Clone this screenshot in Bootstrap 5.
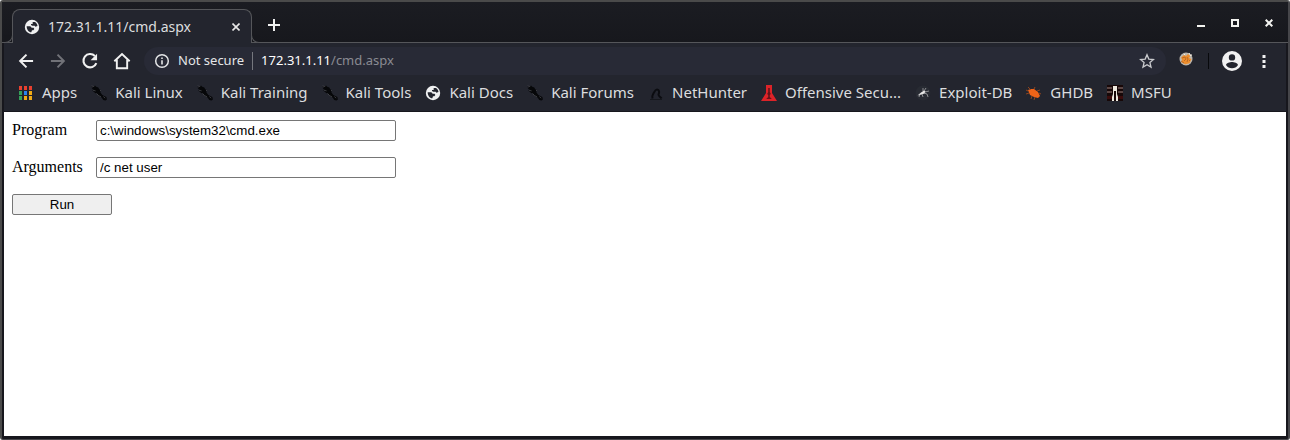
<!DOCTYPE html>
<html lang="en">
<head>
<meta charset="utf-8">
<meta name="viewport" content="width=device-width, initial-scale=1">
<title>172.31.1.11/cmd.aspx</title>
<link href="https://cdn.jsdelivr.net/npm/bootstrap@5.3.0/dist/css/bootstrap.min.css" rel="stylesheet">
<style>
body{background:#fff;color:#000;font-family:"Noto Sans",sans-serif}
.frame{background:#17171d;border:2px solid #4a4a4a;border-right-color:#46464a;border-bottom:1px solid #46464a;border-radius:3px;padding:0 2px 3px}
.titlebar{height:41px;background:linear-gradient(#1b1c22,#17181d);border-bottom:1px solid #55565a;padding:0 2px 0 10px;margin:0 -2px}
.browser-tab{position:relative;width:240px;height:34px;margin-bottom:-1px;background:#23252e;border:1px solid #55565a;border-bottom:0;border-radius:8px 8px 0 0;color:#dcdddf;font-size:14px;padding:0 11px}
.browser-tab::before,.browser-tab::after{content:"";position:absolute;bottom:0;width:9px;height:8px;border-bottom:1px solid #55565a;background:#17181d}
.browser-tab::before{left:-9px;border-right:1px solid #55565a;border-bottom-right-radius:8px}
.browser-tab::after{right:-9px;border-left:1px solid #55565a;border-bottom-left-radius:8px}
.plain{background:none;border:0;padding:0;color:#f1f1f1;display:flex;align-items:center;justify-content:center;flex:none}
.plain svg,.mark-link svg{display:block;flex:none}
.tool{width:32px;height:36px}
.win{width:34px;height:34px}
.new-tab{margin-left:5px}
.chrome{background:#23252e;color:#e4e5e7}
.controls{padding:0 6px}
.omnibox{background:#282a36;border-radius:14px;height:28px;font-size:13px;padding:0 11px 0 10px;margin-left:6px}
.split{width:1px;height:18px;background:#75777e}
.split-dark{width:1px;height:16px;background:#08090c;margin:0 7px 0 6px}
.address{color:#fff;text-decoration:none}
.address span{color:#8a8b92}
.marks{height:32px;gap:14px;font-size:15px;padding:0 14px 5px;white-space:nowrap}
.mark-link{color:#dcdddf;text-decoration:none;display:flex;align-items:center;gap:8px}
.viewport{background:#fff;margin-top:1px;min-height:calc(100vh - 116px);padding:8px;font-family:"Liberation Serif",serif;font-size:16px;line-height:20px}
.field{height:21px;margin-bottom:16px}
.field label{width:84px;flex:none}
.field input{width:300px;height:21px;border:1px solid #767676;border-radius:2px;padding:1px 3px;background:#fff;color:#000;font:smaller "Liberation Sans",sans-serif}
.run{width:100px;height:21px;border:1px solid #767676;border-radius:2px;background:#efefef;color:#000;padding:0;font:smaller "Liberation Sans",sans-serif;display:block}
</style>
</head>
<body>
<svg width="0" height="0" class="position-absolute" aria-hidden="true">
<symbol id="globe" viewBox="0 0 24 24"><circle cx="12" cy="12" r="10.8" fill="#eff0f1"/><path d="M13 4.500h3.500c2 1.200 3.600 3.600 3.700 6l-3.200 1.200-1-1.700h-3.500L10.500 9V7.500H13zM4 11h5.500l2 2h2.800l1.200 2-1.500 2h-2l-1 3C7 20 4 16 4 11z" fill="#23252e"/></symbol>
<symbol id="dragon" viewBox="0 0 16 16"><path d="m0 1 3.400.2L4 .4l1.200 1.400 2.100.7.9 1.800 1.400.6-.2 2.300 1.700 2.500 2.100 1.200 2.200 1.100.5 2.500-1.400 1-2.200-.4-1.700-2.600-2.400-1-1.800-2.600-2.200-.9L1 5.300l1.800.2L.5 2.700l2 .5z" fill="#060709"/><path d="m.5 1 2.700.6M2 5.200l2.600.7M9 5l1 1M5.500 8.400l2 2.200 2.500 1.200m2.400-.2 1.800 1.500" stroke="#5b5c62" stroke-width=".6" fill="none"/></symbol>
</svg>

<div class="frame">
  <header class="titlebar d-flex align-items-end">
    <div class="browser-tab d-flex align-items-center">
      <svg width="16" height="16" class="me-2 flex-shrink-0"><use href="#globe"/></svg>
      <span class="flex-grow-1">172.31.1.11/cmd.aspx</span>
      <button class="plain" type="button" aria-label="Close tab"><svg width="8" height="8" viewBox="0 0 8 8"><path d="m.5.5 7 7m0-7-7 7" stroke="#e8e8e8" stroke-width="1.6"/></svg></button>
    </div>
    <button class="plain win new-tab" type="button" aria-label="New tab"><svg width="12" height="12" viewBox="0 0 12 12"><path d="M6 0v12M0 6h12" stroke="#f1f1f1" stroke-width="2"/></svg></button>
    <div class="d-flex ms-auto">
      <button class="plain win" type="button" aria-label="Minimise"><svg width="8" height="8"><path d="M0 4h8v2H0z" fill="#f3f3f0"/></svg></button>
      <button class="plain win pb-1" type="button" aria-label="Maximise"><svg width="8" height="8"><path d="M1 1h6v6H1z" fill="none" stroke="#f3f3f0" stroke-width="2"/></svg></button>
      <button class="plain win pb-1" type="button" aria-label="Close"><svg width="8" height="8"><path d="m.7.7 6.600 6.600m0-6.600L.7 7.300" stroke="#f3f3f0" stroke-width="2"/></svg></button>
    </div>
  </header>

  <div class="chrome">
    <nav class="controls d-flex align-items-center" aria-label="Browser controls">
      <button class="plain tool" type="button" aria-label="Back"><svg width="20" height="20" viewBox="0 0 24 24"><path d="M20.500 12H5m7.600-7.600L5 12l7.600 7.600" fill="none" stroke="#f1f1f1" stroke-width="2.400"/></svg></button>
      <button class="plain tool" type="button" aria-label="Forward"><svg width="20" height="20" viewBox="0 0 24 24"><path d="M3.500 12H19m-7.600-7.600L19 12l-7.600 7.600" fill="none" stroke="#717278" stroke-width="2.400"/></svg></button>
      <button class="plain tool" type="button" aria-label="Reload"><svg width="20" height="20" viewBox="0 0 24 24"><path d="M17.900 6.100A8 8 0 1 0 19.600 14.500" fill="none" stroke="#f1f1f1" stroke-width="2.500"/><path d="M20.500 3.200V11h-7.800z" fill="#f1f1f1"/></svg></button>
      <button class="plain tool" type="button" aria-label="Home"><svg width="20" height="20" viewBox="0 0 24 24"><path d="M2.800 12.300 12 3.600l9.200 8.700M5.800 10.500v10.200h12.400V10.500" fill="none" stroke="#f1f1f1" stroke-width="2.300"/></svg></button>
      <div class="omnibox d-flex align-items-center flex-grow-1">
        <svg width="16" height="16" viewBox="0 0 16 16" class="me-2"><circle cx="8" cy="8" r="6.300" fill="none" stroke="#e4e5e7" stroke-width="1.500"/><path d="M7.200 7.200h1.600v4.300H7.200zm0-2.800h1.600V6H7.200z" fill="#e4e5e7"/></svg>
        <span>Not secure</span>
        <span class="split mx-2"></span>
        <a class="address flex-grow-1" href="#">172.31.1.11<span>/cmd.aspx</span></a>
        <button class="plain" type="button" aria-label="Bookmark"><svg width="16" height="16" viewBox="0 0 24 24"><path d="m12 2.600 2.700 6.500 7 .6-5.300 4.600 1.600 6.900-6-3.700-6 3.700 1.600-6.900-5.300-4.600 7-.6z" fill="none" stroke="#c9cacd" stroke-width="2"/></svg></button>
      </div>
      <button class="plain tool ms-1 pb-1" type="button" aria-label="Cookie extension"><svg width="16" height="16" viewBox="0 0 16 16"><circle cx="8" cy="8" r="6.500" fill="#bdb7ae"/><path d="M3 6.500 6 4l2 1 2-2 2.200 2L11 7l2.500 1-2 4.200-4.300 1L3 11l1.200-2z" fill="#ed8d2c"/><path d="m4 7 3-1 1 2-2 2m3-4 1 2-1 3M3 10l3 2m5-3 1 1" stroke="#a75c20" stroke-width=".7" fill="none"/><path d="m11 2 2 3 .5-1.500M6 4l1-1" stroke="#f4eee0" fill="none"/></svg></button>
      <span class="split-dark"></span>
      <button class="plain tool" type="button" aria-label="Profile"><svg width="24" height="24" viewBox="0 0 24 24"><path fill-rule="evenodd" d="M12 2a10 10 0 1 0 0 20 10 10 0 0 0 0-20zm0 3.200a3.200 3.200 0 1 1 0 6.400 3.200 3.200 0 0 1 0-6.400zm0 14a7.200 7.200 0 0 1-6-3.200c0-2 4-3.100 6-3.100s6 1.100 6 3.100a7.200 7.200 0 0 1-6 3.200z" fill="#f1f1f1"/></svg></button>
      <button class="plain tool" type="button" aria-label="Menu"><svg width="4" height="14"><path d="M.5 1h3v3h-3zm0 5h3v3h-3zm0 5h3v3h-3z" fill="#f1f1f1"/></svg></button>
    </nav>

    <nav class="marks d-flex align-items-center" aria-label="Bookmarks">
      <a class="mark-link" href="#"><svg width="16" height="16" viewBox="0 0 16 16"><path d="M1 1h3v4H1zm5 0h3v4H6zm5 0h3v4h-3z" fill="#e8402f"/><path d="M1 6h3v4H1zm0 5h3v4H1z" fill="#34a059"/><path d="M6 6h3v4H6z" fill="#2a83ec"/><path d="M11 6h3v4h-3zm-5 5h3v4H6zm5 0h3v4h-3z" fill="#f0ab16"/></svg>Apps</a>
      <a class="mark-link" href="#"><svg width="16" height="16"><use href="#dragon"/></svg>Kali Linux</a>
      <a class="mark-link" href="#"><svg width="16" height="16"><use href="#dragon"/></svg>Kali Training</a>
      <a class="mark-link" href="#"><svg width="16" height="16"><use href="#dragon"/></svg>Kali Tools</a>
      <a class="mark-link" href="#"><svg width="16" height="16"><use href="#globe"/></svg>Kali Docs</a>
      <a class="mark-link" href="#"><svg width="16" height="16"><use href="#dragon"/></svg>Kali Forums</a>
      <a class="mark-link" href="#"><svg width="16" height="16" viewBox="0 0 16 16"><path d="M4.500 13.500c-1-3 .5-4 1.500-6s2-3 3-3c2.500 0 2.500 3 1.500 5 0 2 2 2 3 4" fill="none" stroke="#0b0c10" stroke-width="2"/><path d="M2 14.500h12" stroke="#15171c"/></svg>NetHunter</a>
      <a class="mark-link" href="#"><svg width="16" height="16" viewBox="0 0 16 16"><path d="M5 0h6v8l5 8H0l5-8z" fill="#dc2328"/><path d="M7.200 3h1.600v4l1 2-1 1v2l2 2H5.200l2-2v-2l-1-1 1-2z" fill="#65151b"/></svg>Offensive Secu...</a>
      <a class="mark-link" href="#"><svg width="16" height="16" viewBox="0 0 16 16"><circle cx="8" cy="8" r="7.500" fill="#282b33"/><path d="M2.500 10.500 6 7.500l3-2 1.500 1-1 2-3 1z" fill="#e6e6e6"/><path d="m8 6 0-3M9 6l2-3m-1 4 4-1m-5 2 3 1 1 3M7 9l1 3M5 9l-1 3" stroke="#b5b6b8" stroke-width=".7" fill="none"/></svg>Exploit-DB</a>
      <a class="mark-link" href="#"><svg width="16" height="16" viewBox="0 0 16 16"><path d="m2 5 3-1 3 0 4 3 2 4-2 2-4-1-4-2z" fill="#f06418"/><path d="m5 5-3-3m6 2 1-2m2 4 3-1m-1 3 2 1m-9 2-1 3m4-2-1 3M3 8l-3 1M2 6 0 5" stroke="#a94b1a" stroke-width=".8" fill="none"/></svg>GHDB</a>
      <a class="mark-link" href="#"><svg width="16" height="16" viewBox="0 0 16 16"><path d="M0 0h16v16H0z" fill="#170808"/><path d="M0 3h5M0 7h5M11 3h5M11 7h5" stroke="#5b4543" stroke-width="2"/><path d="M0 11h5v3H0zm11 0h5v3h-5z" fill="#3b0c0c"/><path d="M6 1h4v8l1 3v4H9V6H7v10H5v-4l1-3z" fill="#eee9df"/></svg>MSFU</a>
    </nav>
  </div>

  <main class="viewport">
    <form onsubmit="return false">
      <div class="field d-flex"><label for="program">Program</label><input id="program" type="text" value="c:\windows\system32\cmd.exe"></div>
      <div class="field d-flex"><label for="arguments">Arguments</label><input id="arguments" type="text" value="/c net user"></div>
      <button class="run" type="submit">Run</button>
    </form>
  </main>
</div>
<script src="https://cdn.jsdelivr.net/npm/bootstrap@5.3.0/dist/js/bootstrap.bundle.min.js"></script>
</body>
</html>
